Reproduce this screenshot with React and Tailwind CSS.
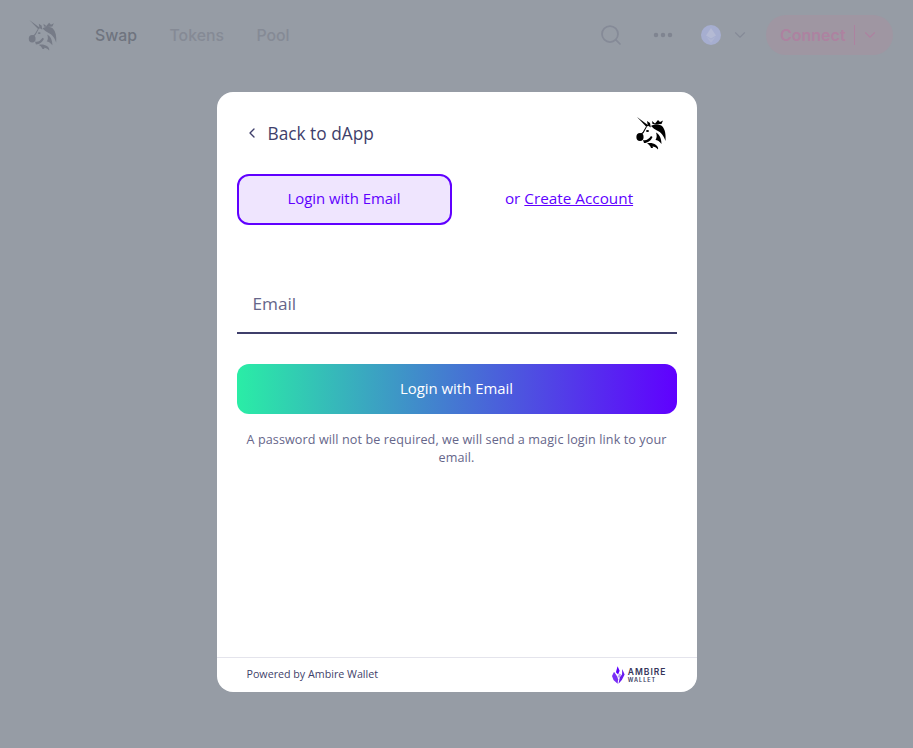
import React from 'react';
import { ChevronDown, ChevronLeft, MoreHorizontal, Search } from 'lucide-react';

const Unicorn = ({ className }) => (
    <svg viewBox="4 3 31 34" className={className} fill="currentColor">
        <path d="M5 4 L16.5 12.5 L14.5 14 Z" />
        <path d="M15 8 L18 10 L18.8 14.5 L15.8 12.5 Z" />
        <path d="M19 13 C22 11 27 11 30 13 C33 16 34 21 33.5 28 C32 23 29 19 25 17.5 C23 16.5 21 15 19 13 Z" />
        <path d="M20 8 L23 10.5 L26 7 L28 9 L31 7.5 L29.5 11 L24 11.5 L20.5 11 Z" />
        <path d="M24 19.5 C27 21 29.5 25 29.5 31 C27.5 28.5 25.5 27 23.5 27 C25 25 25 22 24 19.5 Z" />
        <path d="M11 27 C14 28 17 26 19 23 L20.5 24 C19 27.5 16 30 12 30 Z" />
        <path d="M15 30.5 C18 29.5 21 30 24 32 C25.5 33 26.5 35 26 36.5 C24.5 34.5 22.5 33.5 20.5 33.5 L21 35 L19 35 C18.5 33 17 31.5 15 30.5 Z" />
        <path d="M14 13.5 L14.8 14 L11.5 20 L9 22 L8.5 21 L10.8 19 Z" />
        <ellipse cx="8" cy="24" rx="3.6" ry="4" />
        <ellipse cx="15.5" cy="18" rx="1.5" ry="0.9" />
    </svg>
);

const Flame = () => (
    <svg width="13" height="18" viewBox="0 0 14 19" className="shrink-0">
        <path d="M6 0 L8.2 5 L6.6 9 L4.2 6.6 Z" fill="#6000ff" />
        <path d="M11 3 L13.6 9 L10.6 15 L7 18.8 L8.4 12 L10.8 9 Z" fill="#6a1bf0" />
        <path d="M2.2 6 L5.6 11 L6.6 14 L6 18.8 L1.6 15 L0 10.6 Z" fill="#7a2ff5" />
        <path d="M8 8 L10 9 L7.6 13 L6.4 10.8 Z" fill="#b99cf7" />
    </svg>
);

const Header = () => (
    <header className="flex h-[70px] items-center justify-between pl-[28px] pr-[20px] font-['Inter',sans-serif]">
        <div className="flex items-center">
            <Unicorn className="h-[32px] w-[30px] text-[#767b87]" />
            <nav className="ml-[37px] flex items-center gap-[32.5px] pt-[1px] text-[15.8px] font-medium">
                <span className="text-[#6f747f]">Swap</span>
                <span className="text-[#858a95]">Tokens</span>
                <span className="text-[#858a95]">Pool</span>
            </nav>
        </div>
        <div className="flex items-center">
            <Search className="h-[24px] w-[24px] text-[#858a97]" strokeWidth={1.75} />
            <MoreHorizontal className="ml-[28px] h-[24px] w-[24px] text-[#7f8490]" strokeWidth={2.5} />
            <div className="ml-[26px] flex h-[20px] w-[20px] items-center justify-center rounded-full bg-[#a6aed0]">
                <svg width="10" height="15" viewBox="0 0 10 15">
                    <path d="M5 0 L10 7.5 L5 10.4 L0 7.5 Z" fill="#b4bad4" />
                    <path d="M5 11.6 L9.6 8.8 L5 15 L0.4 8.8 Z" fill="#aeb5d2" />
                </svg>
            </div>
            <ChevronDown className="ml-[10px] h-[18px] w-[18px] text-[#858a97]" strokeWidth={1.5} />
            <div className="ml-[17px] flex h-[40px] w-[127px] items-center rounded-full bg-[#9f96a2] pl-[14px]">
                <span className="text-[16px] font-semibold text-[#ad82a0]">Connect</span>
                <span className="ml-[8px] h-[20px] w-px bg-[#ad82a0]"></span>
                <ChevronDown className="ml-[6px] h-[18px] w-[18px] text-[#ad82a0]" strokeWidth={1.5} />
            </div>
        </div>
    </header>
);

const Modal = () => (
    <div className="flex h-[600px] w-[480px] flex-col overflow-hidden rounded-[16px] bg-white font-['Open_Sans',sans-serif]">
        <div className="flex flex-1 flex-col px-[20px]">
            <div className="flex h-[82px] items-center justify-between pl-[7px] pr-[10px]">
                <div className="flex items-center gap-[8px] text-[#3f3f6b]">
                    <ChevronLeft className="h-[16px] w-[16px]" strokeWidth={2} />
                    <span className="pt-[1px] text-[17.3px]">Back to dApp</span>
                </div>
                <Unicorn className="h-[34px] w-[31px] text-black" />
            </div>
            <div className="flex items-center">
                <button className="h-[51px] w-[215px] rounded-[12px] border-2 border-[#6000ff] bg-[#efe5fe] pb-[2px] text-[14.9px] font-medium text-[#6000ff]">
                    Login with Email
                </button>
                <div className="flex-1 pb-[2px] pl-[10px] text-center text-[15.3px] font-medium text-[#6000ff]">
                    or <span className="underline">Create Account</span>
                </div>
            </div>
            <div className="mt-[50px] flex h-[59px] items-center border-b-2 border-[#3f3f6b] pl-[16px] text-[17.2px] text-[#66668a]">
                Email
            </div>
            <button className="mt-[30px] h-[50px] rounded-[12px] bg-[linear-gradient(90deg,#2aeda6_0%,#6000ff_100%)] pb-[2px] text-[14.9px] font-medium text-white">
                Login with Email
            </button>
            <p className="mt-[17px] px-[8px] text-center text-[12.6px] leading-[18px] tracking-[0.1px] text-[#66668a]">
                A password will not be required, we will send a magic login link to your email.
            </p>
        </div>
        <footer className="flex h-[35px] items-center justify-between border-t border-[#e4e4ec] px-[30px]">
            <span className="pb-[1px] text-[10.7px] text-[#3f3f6b]">Powered by Ambire Wallet</span>
            <div className="flex items-center gap-[3px]">
                <Flame />
                <div className="flex flex-col pt-[1px] font-['Inter',sans-serif] font-semibold text-[#35355a]">
                    <span className="text-[8.5px] leading-[10.5px] tracking-[1px]">AMBIRE</span>
                    <span className="text-[5.5px] leading-[7px] tracking-[1px]">WALLET</span>
                </div>
            </div>
        </footer>
    </div>
);

export default function App() {
    return (
        <div className="relative h-[748px] w-[913px] overflow-hidden bg-[#969ca5]">
            <Header />
            <div className="absolute inset-0 flex justify-center pt-[92px]">
                <Modal />
            </div>
        </div>
    );
}
